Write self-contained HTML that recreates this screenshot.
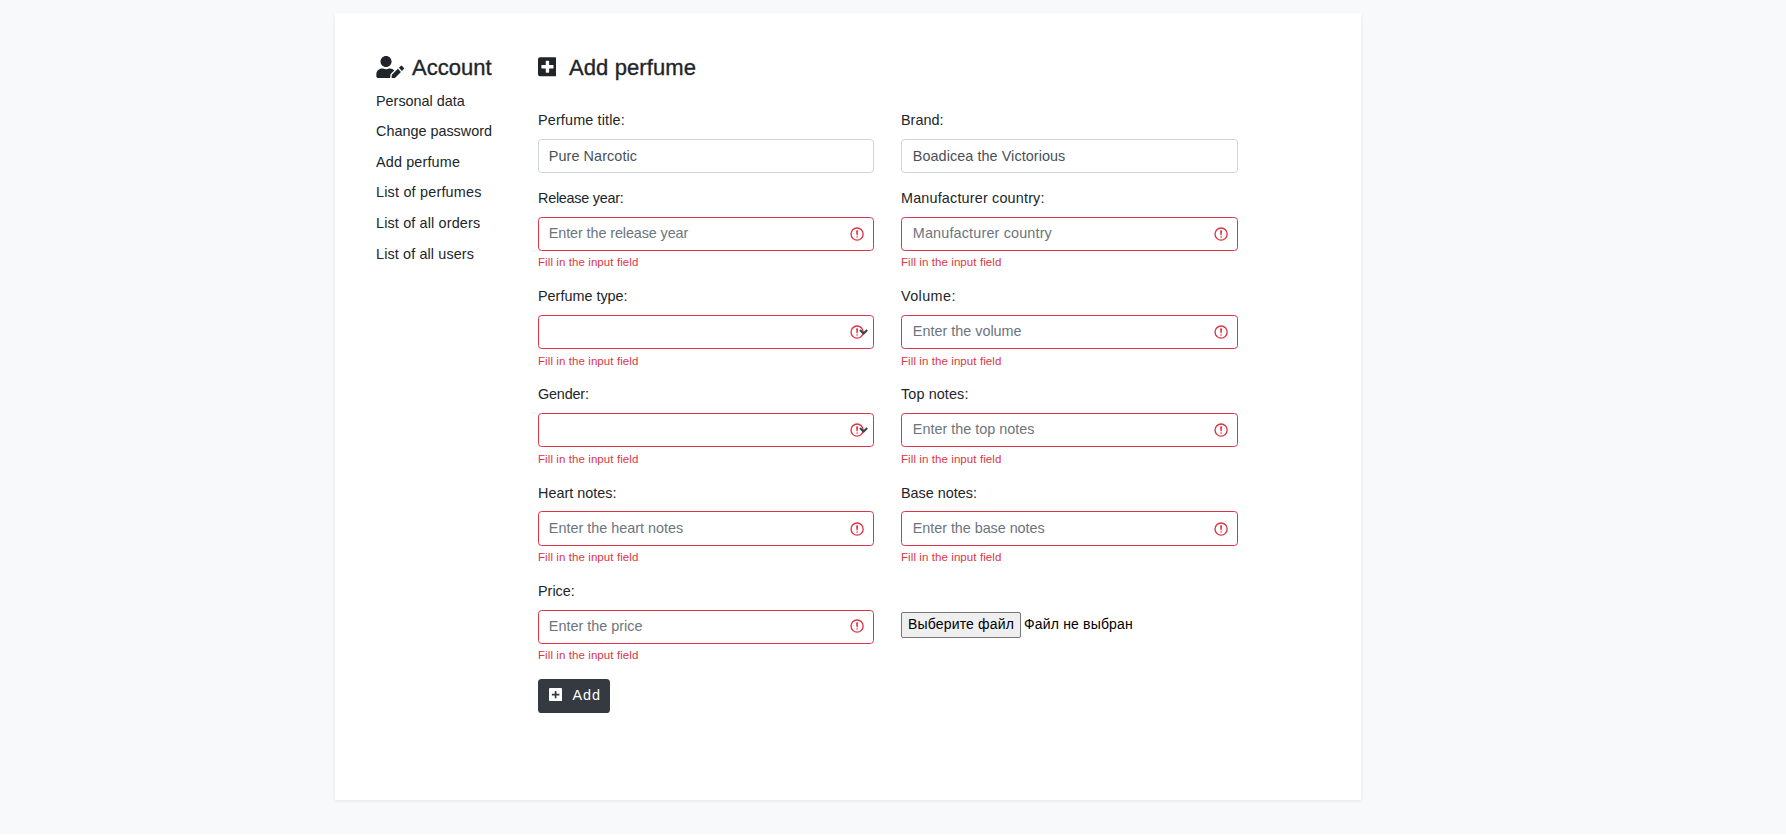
<!DOCTYPE html>
<html><head><meta charset="utf-8">
<style>
*{box-sizing:border-box}
html,body{margin:0;padding:0}
body{width:1786px;height:835px;background:#f8f9fa;font-family:"Liberation Sans",sans-serif;color:#212529;font-size:14.4px;line-height:21.6px;position:relative;overflow:hidden}
.card{position:absolute;left:335px;top:13px;width:1026px;height:787px;background:#fff;box-shadow:0 1.8px 3.6px rgba(0,0,0,.075)}
.abs{position:absolute;white-space:nowrap}
h4{margin:0;font-size:22px;font-weight:normal;line-height:26px;-webkit-text-stroke:0.35px #212529}
.side a{position:absolute;left:376px;color:#212529;text-decoration:none;white-space:nowrap}
.lbl{position:absolute;white-space:nowrap}
.inp{position:absolute;width:336.4px;height:34px;border:1px solid #ced4da;border-radius:3.6px;background:#fff;padding:0 0 0 9.8px;line-height:30px;white-space:nowrap;color:#495057}
.inp.inv{border-color:#dc3545}
.ph{color:#6c757d}
.fb{position:absolute;font-size:11.52px;line-height:17.28px;color:#dc3545;white-space:nowrap}
.ico{position:absolute;right:8.1px;top:8px;width:16.2px;height:16.2px}
.caret{position:absolute;left:321px;top:13.6px;width:7.2px;height:3.6px;overflow:visible}
.btn{position:absolute;left:538px;top:679px;width:72px;height:34px;background:#343a40;border-radius:3.6px;color:#fff}
.file{position:absolute;left:901px;top:612px;width:120px;height:26px;background:#efefef;border:1px solid #767676;border-radius:2px;font-size:14px;line-height:23px;padding-left:6px;white-space:nowrap;color:#000;letter-spacing:0.17px}
</style></head><body>
<div class="abs" style="left:0;top:834px;width:1786px;height:1px;background:#fff"></div>
<div class="card"></div>

<!-- sidebar -->
<svg class="abs" style="left:375.6px;top:55.8px" width="28.4" height="22.2" viewBox="0 0 640 512"><path fill="#212529" d="M224 256c70.7 0 128-57.3 128-128S294.7 0 224 0 96 57.3 96 128s57.3 128 128 128zm89.6 32h-16.7c-22.2 10.2-46.9 16-72.9 16s-50.6-5.8-72.9-16h-16.7C60.2 288 0 348.2 0 422.4V464c0 26.5 21.5 48 48 48h274.9c-2.4-6.8-3.4-14-2.6-21.3l6.8-60.9 1.2-11.1 7.9-7.9 77.3-77.3c-24.5-27.7-60-45.5-99.9-45.5zm45.3 145.3l-6.8 61c-1.1 10.2 7.5 18.8 17.6 17.6l60.9-6.8 137.9-137.9-71.7-71.7-137.9 137.8zM633 268.9L595.1 231c-9.3-9.3-24.5-9.3-33.8 0l-37.8 37.8-4.1 4.1 71.8 71.7 41.8-41.8c9.3-9.4 9.3-24.5 0-33.9z"/></svg>
<h4 class="abs" style="left:412px;top:55px">Account</h4>
<div class="side">
<a style="top:91px">Personal data</a>
<a style="top:121px">Change password</a>
<a style="top:152px"><span style="letter-spacing:0.15px">Add perfume</span></a>
<a style="top:182px"><span style="letter-spacing:0.2px">List of perfumes</span></a>
<a style="top:213px"><span style="letter-spacing:0.15px">List of all orders</span></a>
<a style="top:244px"><span style="letter-spacing:0.125px">List of all users</span></a>
</div>

<!-- main heading -->
<svg class="abs" style="left:537.6px;top:56px" width="18.9" height="21.6" viewBox="0 0 448 512"><path fill="#212529" d="M400 32H48C21.5 32 0 53.5 0 80v352c0 26.5 21.5 48 48 48h352c26.5 0 48-21.5 48-48V80c0-26.5-21.5-48-48-48zm-32 252c0 6.6-5.4 12-12 12h-92v92c0 6.6-5.4 12-12 12h-56c-6.6 0-12-5.4-12-12v-92H92c-6.6 0-12-5.4-12-12v-56c0-6.6 5.4-12 12-12h92v-92c0-6.6 5.4-12 12-12h56c6.6 0 12 5.4 12 12v92h92c6.6 0 12 5.4 12 12v56z"/></svg>
<h4 class="abs" style="left:569px;top:55px;letter-spacing:0.1px">Add perfume</h4>

<div id="form">
<div class="lbl" style="left:538px;top:110px"><span style="letter-spacing:0.15px">Perfume title:</span></div>
<div class="inp" style="left:538px;top:139px;width:336px;height:34px;padding-left:9.8px;padding-top:1px"><span style="letter-spacing:0.08px">Pure Narcotic</span></div>
<div class="lbl" style="left:901px;top:110px">Brand:</div>
<div class="inp" style="left:901px;top:139px;width:337px;height:34px;padding-left:10.8px;padding-top:1px"><span style="letter-spacing:0.07px">Boadicea the Victorious</span></div>
<div class="lbl" style="left:538px;top:188px"><span style="letter-spacing:-0.25px">Release year:</span></div>
<div class="inp inv" style="left:538px;top:217px;width:336px;height:34px"><span class="ph"><span style="letter-spacing:-0.1px">Enter the release year</span></span><svg class="ico" viewBox="0 0 12 12" fill="none" stroke="#dc3545"><circle cx="6" cy="6" r="4.5"/><path stroke-linejoin="round" d="M5.8 3.6h.4L6 6.5z"/><circle cx="6" cy="8.2" r=".6" fill="#dc3545" stroke="none"/></svg></div>
<div class="fb" style="left:538px;top:254.2px"><span style="letter-spacing:0.08px">Fill in the input field</span></div>
<div class="lbl" style="left:901px;top:188px"><span style="letter-spacing:0.175px">Manufacturer country:</span></div>
<div class="inp inv" style="left:901px;top:217px;width:337px;height:34px;padding-left:10.8px;padding-top:0px"><span class="ph"><span style="letter-spacing:0.16px">Manufacturer country</span></span><svg class="ico" viewBox="0 0 12 12" fill="none" stroke="#dc3545"><circle cx="6" cy="6" r="4.5"/><path stroke-linejoin="round" d="M5.8 3.6h.4L6 6.5z"/><circle cx="6" cy="8.2" r=".6" fill="#dc3545" stroke="none"/></svg></div>
<div class="fb" style="left:901px;top:254.2px"><span style="letter-spacing:0.08px">Fill in the input field</span></div>
<div class="lbl" style="left:538px;top:286px">Perfume type:</div>
<div class="inp inv" style="left:538px;top:315px;width:336px;height:34px"><svg class="ico" viewBox="0 0 12 12" fill="none" stroke="#dc3545"><circle cx="6" cy="6" r="4.5"/><path stroke-linejoin="round" d="M5.8 3.6h.4L6 6.5z"/><circle cx="6" cy="8.2" r=".6" fill="#dc3545" stroke="none"/></svg><svg class="caret" viewBox="0 0 7.2 3.6"><path d="M0 0L3.6 3.6L7.2 0" fill="none" stroke="#3b444d" stroke-width="2.1"/></svg></div>
<div class="fb" style="left:538px;top:353.2px"><span style="letter-spacing:0.08px">Fill in the input field</span></div>
<div class="lbl" style="left:901px;top:286px"><span style="letter-spacing:0.4px">Volume:</span></div>
<div class="inp inv" style="left:901px;top:315px;width:337px;height:34px;padding-left:10.8px;padding-top:0px"><span class="ph">Enter the volume</span><svg class="ico" viewBox="0 0 12 12" fill="none" stroke="#dc3545"><circle cx="6" cy="6" r="4.5"/><path stroke-linejoin="round" d="M5.8 3.6h.4L6 6.5z"/><circle cx="6" cy="8.2" r=".6" fill="#dc3545" stroke="none"/></svg></div>
<div class="fb" style="left:901px;top:353.2px"><span style="letter-spacing:0.08px">Fill in the input field</span></div>
<div class="lbl" style="left:538px;top:384px"><span style="letter-spacing:-0.17px">Gender:</span></div>
<div class="inp inv" style="left:538px;top:413px;width:336px;height:34px"><svg class="ico" viewBox="0 0 12 12" fill="none" stroke="#dc3545"><circle cx="6" cy="6" r="4.5"/><path stroke-linejoin="round" d="M5.8 3.6h.4L6 6.5z"/><circle cx="6" cy="8.2" r=".6" fill="#dc3545" stroke="none"/></svg><svg class="caret" viewBox="0 0 7.2 3.6"><path d="M0 0L3.6 3.6L7.2 0" fill="none" stroke="#3b444d" stroke-width="2.1"/></svg></div>
<div class="fb" style="left:538px;top:451.2px"><span style="letter-spacing:0.08px">Fill in the input field</span></div>
<div class="lbl" style="left:901px;top:384px"><span style="letter-spacing:0.11px">Top notes:</span></div>
<div class="inp inv" style="left:901px;top:413px;width:337px;height:34px;padding-left:10.8px;padding-top:0px"><span class="ph">Enter the top notes</span><svg class="ico" viewBox="0 0 12 12" fill="none" stroke="#dc3545"><circle cx="6" cy="6" r="4.5"/><path stroke-linejoin="round" d="M5.8 3.6h.4L6 6.5z"/><circle cx="6" cy="8.2" r=".6" fill="#dc3545" stroke="none"/></svg></div>
<div class="fb" style="left:901px;top:451.2px"><span style="letter-spacing:0.08px">Fill in the input field</span></div>
<div class="lbl" style="left:538px;top:483px">Heart notes:</div>
<div class="inp inv" style="left:538px;top:511px;width:336px;height:35px;padding-left:9.8px;padding-top:1px"><span class="ph">Enter the heart notes</span><svg class="ico" style="top:9px" viewBox="0 0 12 12" fill="none" stroke="#dc3545"><circle cx="6" cy="6" r="4.5"/><path stroke-linejoin="round" d="M5.8 3.6h.4L6 6.5z"/><circle cx="6" cy="8.2" r=".6" fill="#dc3545" stroke="none"/></svg></div>
<div class="fb" style="left:538px;top:549.2px"><span style="letter-spacing:0.08px">Fill in the input field</span></div>
<div class="lbl" style="left:901px;top:483px">Base notes:</div>
<div class="inp inv" style="left:901px;top:511px;width:337px;height:35px;padding-left:10.8px;padding-top:1px"><span class="ph"><span style="letter-spacing:-0.05px">Enter the base notes</span></span><svg class="ico" style="top:9px" viewBox="0 0 12 12" fill="none" stroke="#dc3545"><circle cx="6" cy="6" r="4.5"/><path stroke-linejoin="round" d="M5.8 3.6h.4L6 6.5z"/><circle cx="6" cy="8.2" r=".6" fill="#dc3545" stroke="none"/></svg></div>
<div class="fb" style="left:901px;top:549.2px"><span style="letter-spacing:0.08px">Fill in the input field</span></div>
<div class="lbl" style="left:538px;top:581px">Price:</div>
<div class="inp inv" style="left:538px;top:610px;width:336px;height:34px"><span class="ph">Enter the price</span><svg class="ico" style="top:7px" viewBox="0 0 12 12" fill="none" stroke="#dc3545"><circle cx="6" cy="6" r="4.5"/><path stroke-linejoin="round" d="M5.8 3.6h.4L6 6.5z"/><circle cx="6" cy="8.2" r=".6" fill="#dc3545" stroke="none"/></svg></div>
<div class="fb" style="left:538px;top:647.2px"><span style="letter-spacing:0.08px">Fill in the input field</span></div>
<div class="file">Выберите файл</div>
<div class="abs" style="left:1024px;top:613px;font-size:14px;line-height:23px;color:#000;letter-spacing:0.17px">Файл не выбран</div>
<div class="btn"><svg class="abs" style="left:11px;top:9px" width="13.2" height="13.2" viewBox="0 0 13.2 13.2"><rect x="0" y="0" width="13.2" height="13.2" rx="1.1" fill="#fff"/><path fill="#343a40" d="M2.9 5.8H10.4V7.5H2.9z M5.75 3.0H7.45V10.3H5.75z"/></svg><span class="abs" style="left:34.5px;top:6px;letter-spacing:0.9px">Add</span></div>
</div>
<!--endform-->
</body></html>
